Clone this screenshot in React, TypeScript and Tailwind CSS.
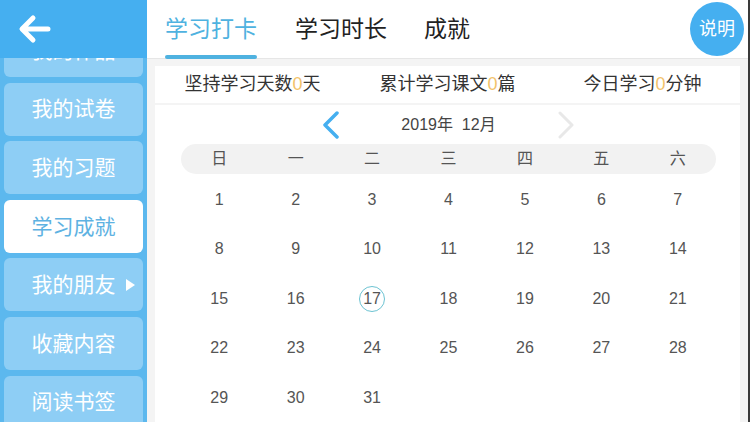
const menu = ["我的作品", "我的试卷", "我的习题", "学习成就", "我的朋友", "收藏内容", "阅读书签"];
const weekdays = ["日", "一", "二", "三", "四", "五", "六"];

function Sidebar() {
    return (
        <aside className="relative w-[147px] h-full shrink-0 bg-[#5cb8ee] overflow-hidden">
            {/* Header over the list */}
            <div className="absolute top-0 left-0 right-0 h-[58px] bg-[#45aff0] z-10 flex items-center pl-[18px]">
                <svg width="34" height="30" viewBox="0 0 34 30" fill="none" stroke="white" strokeWidth="5" strokeLinecap="round" strokeLinejoin="round">
                    <path d="M30 15H5M15 4L4 15l11 11" />
                </svg>
            </div>

            <div className="flex flex-col gap-[5.6px] px-[4px] pt-[24px]">
                {menu.map((m) => {
                    const active = m === "学习成就";
                    return (
                        <div
                            key={m}
                            className={`relative h-[53px] rounded-[6px] flex items-center justify-center text-[21px] ${active ? "bg-white text-[#5eb2e2]" : "bg-[#8ecef5] text-white"}`}
                        >
                            {m}
                            {m === "我的朋友" && (
                                <span className="absolute right-[8px] top-1/2 -translate-y-1/2 w-0 h-0 border-y-[6px] border-y-transparent border-l-[9px] border-l-white" />
                            )}
                        </div>
                    );
                })}
            </div>
        </aside>
    );
}

function Stat({ label, value, unit }: { label: string; value: number; unit: string }) {
    return (
        <p className="text-center">
            {label}
            <span className="text-[#f2c36b]">{value}</span>
            {unit}
        </p>
    );
}

export default function App() {
    const days = Array.from({ length: 31 }, (_, i) => i + 1);
    // December 2019 starts on a Sunday
    const rows: (number | null)[][] = [];
    for (let i = 0; i < 35; i += 7) {
        rows.push(Array.from({ length: 7 }, (_, j) => days[i + j] ?? null));
    }

    return (
        <div className="flex w-[750px] h-[422px] overflow-hidden font-['Liberation_Sans','Noto_Sans_CJK_SC',sans-serif] bg-white">
            <Sidebar />

            <main className="flex-1 flex flex-col bg-[#f4f4f4] min-w-0">
                {/* Tabs */}
                <div className="h-[59px] shrink-0 bg-white border-b border-[#e6e6e6] flex items-stretch pl-[18px] pr-[4px]">
                    <div className="relative flex items-center text-[23px] text-[#4fb2e0]">
                        学习打卡
                        <span className="absolute left-0 right-0 bottom-[-1px] h-[4px] rounded-full bg-[#4fb2e0]" />
                    </div>
                    <div className="flex items-center ml-[38px] text-[23px] text-[#222]">学习时长</div>
                    <div className="flex items-center ml-[37px] text-[23px] text-[#222]">成就</div>
                    <div className="ml-auto self-center w-[54px] h-[54px] rounded-full bg-[#45aff0] text-white text-[18px] flex items-center justify-center">
                        说明
                    </div>
                </div>

                <div className="flex-1 flex flex-col pl-[8px] pr-[8px] pt-[7px] gap-[2px] min-h-0">
                    {/* Stats */}
                    <div className="h-[37px] shrink-0 bg-white grid grid-cols-3 items-center text-[18px] text-[#333]">
                        <Stat label="坚持学习天数" value={0} unit="天" />
                        <Stat label="累计学习课文" value={0} unit="篇" />
                        <Stat label="今日学习" value={0} unit="分钟" />
                    </div>

                    {/* Calendar */}
                    <div className="flex-1 bg-white pl-[26px] pr-[24px]">
                        <div className="h-[39px] flex items-center justify-center gap-[60px]">
                            <svg width="20" height="28" viewBox="0 0 20 28" fill="none" stroke="#45aff0" strokeWidth="3.5" strokeLinecap="round" strokeLinejoin="round">
                                <path d="M16 2L4 14l12 12" />
                            </svg>
                            <span className="text-[16px] text-[#444]">2019年&nbsp;&nbsp;12月</span>
                            <svg width="20" height="28" viewBox="0 0 20 28" fill="none" stroke="#e8e8e8" strokeWidth="3" strokeLinecap="round" strokeLinejoin="round">
                                <path d="M4 2l12 12L4 26" />
                            </svg>
                        </div>

                        <div className="h-[30px] rounded-full bg-[#f2f2f2] grid grid-cols-7 items-center text-[16px] text-[#555]">
                            {weekdays.map((w) => (
                                <span key={w} className="text-center">{w}</span>
                            ))}
                        </div>

                        <div className="pt-[1px]">
                            {rows.map((r, ri) => (
                                <div key={ri} className="h-[49.5px] grid grid-cols-7 items-center text-[16px] text-[#555]">
                                    {r.map((d, di) => (
                                        <div key={di} className="flex justify-center">
                                            {d === 17 ? (
                                                <span className="w-[26px] h-[26px] rounded-full border border-[#6cc3d2] flex items-center justify-center">
                                                    {d}
                                                </span>
                                            ) : (
                                                <span>{d ?? ""}</span>
                                            )}
                                        </div>
                                    ))}
                                </div>
                            ))}
                        </div>
                    </div>
                </div>
            </main>

            <div className="w-[2px] h-full bg-[#3a3a3a] shrink-0" />
        </div>
    );
}
